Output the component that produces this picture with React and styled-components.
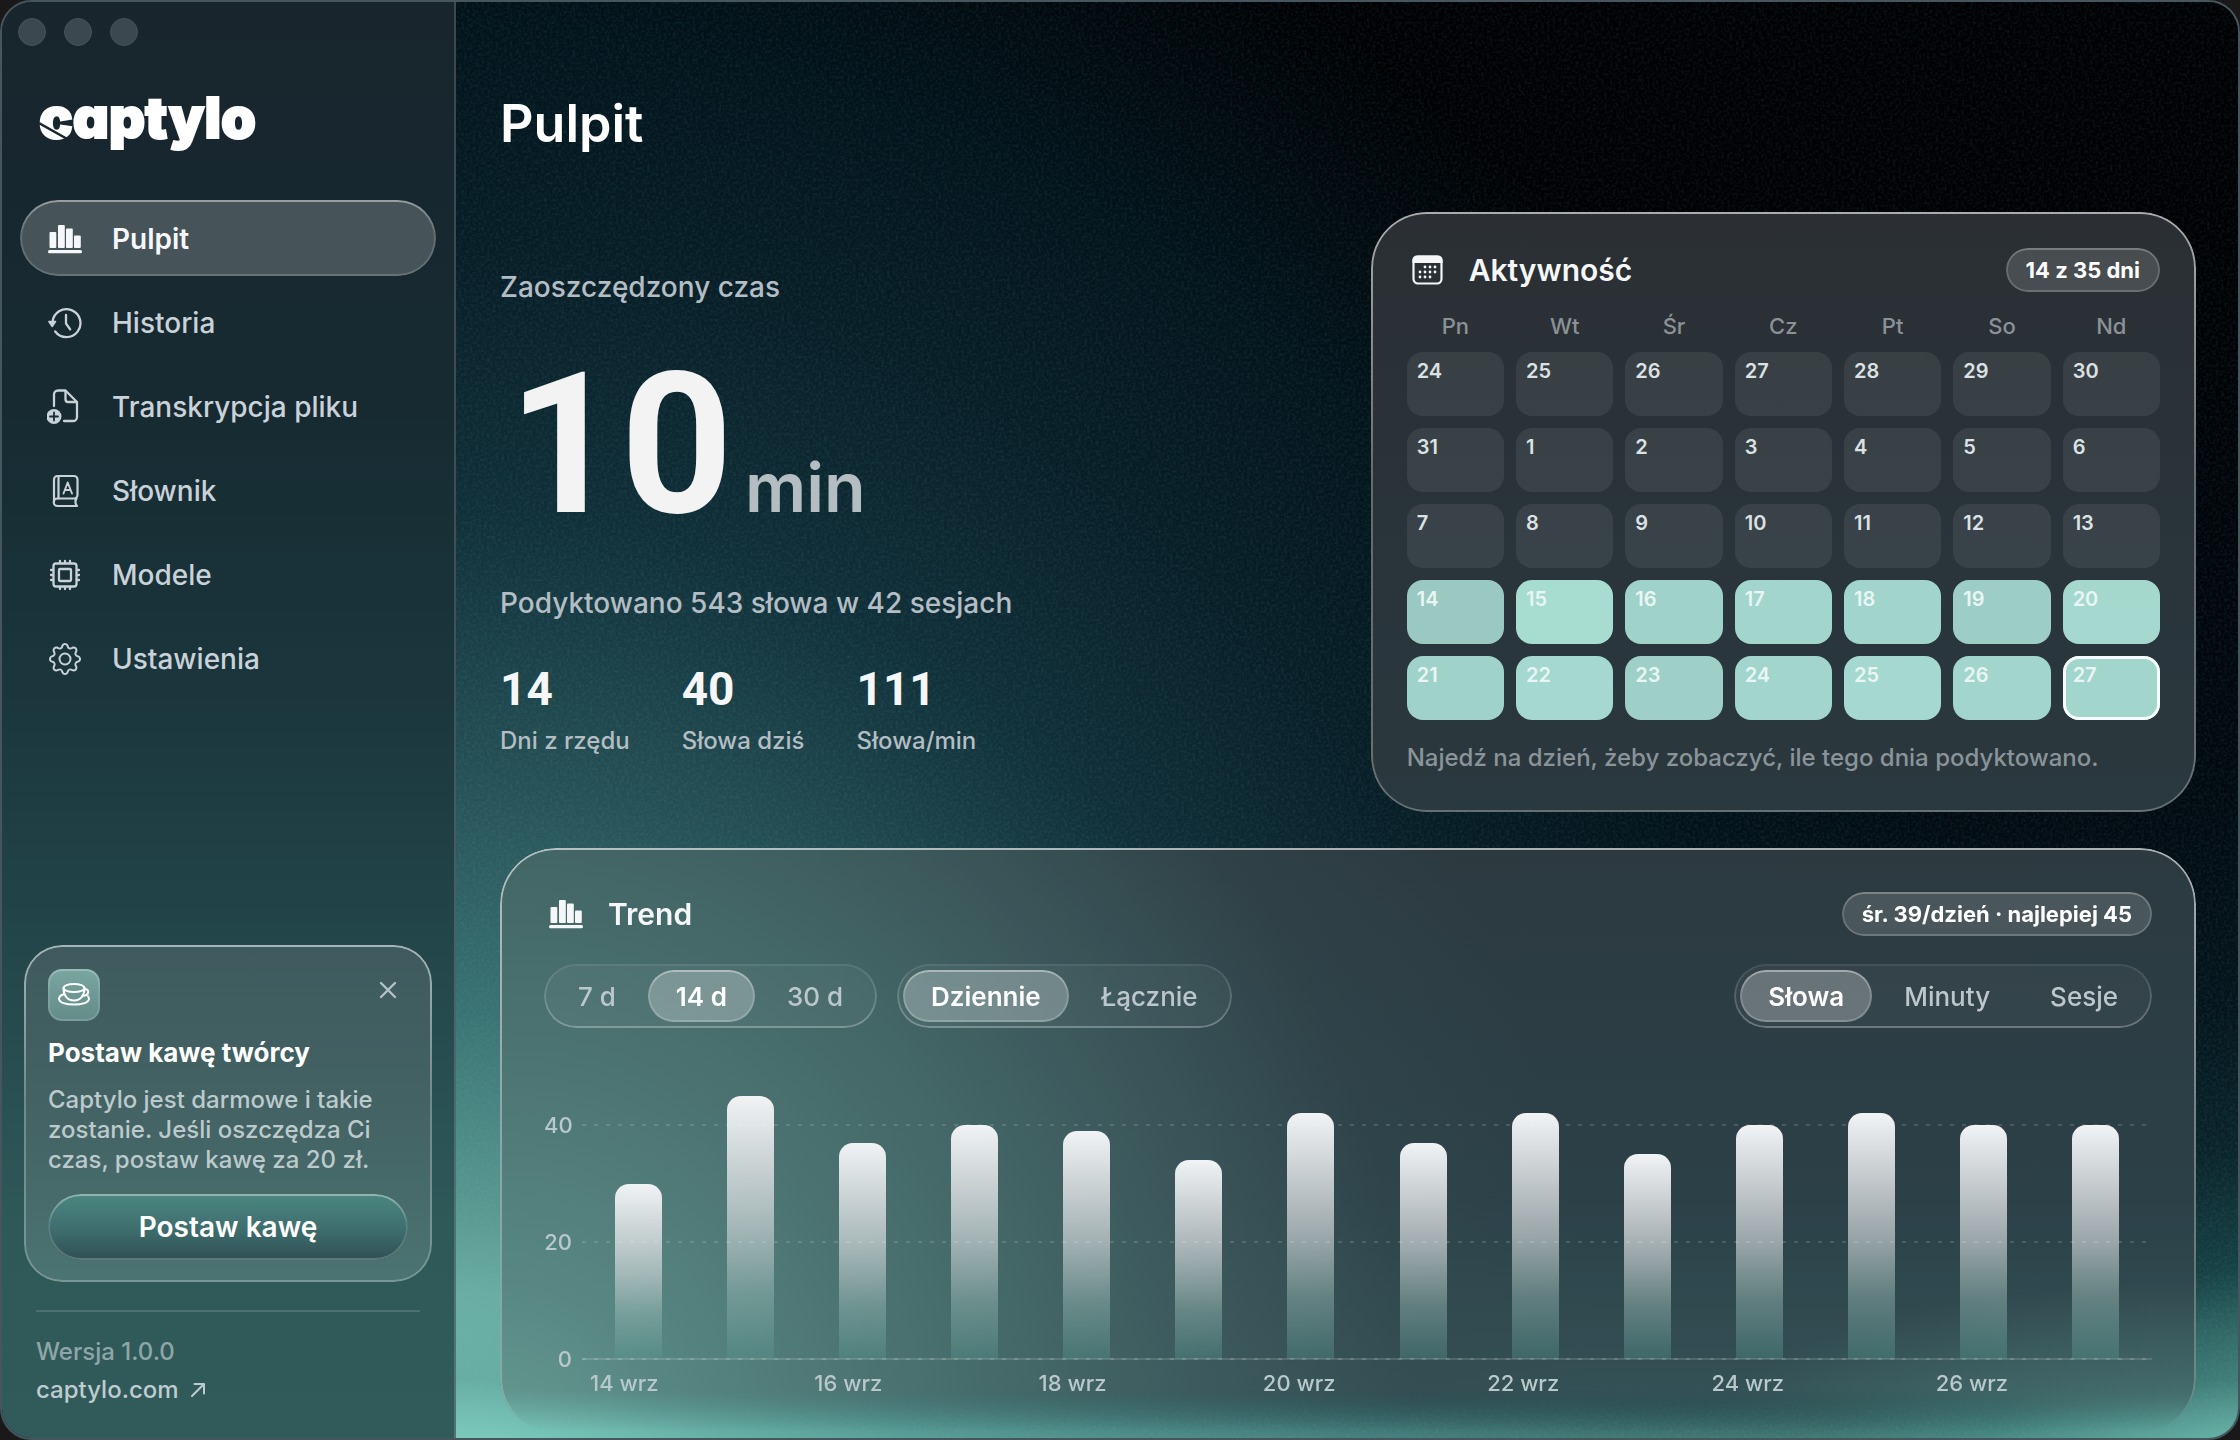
import { useState } from "react";
import styled, { createGlobalStyle, css } from "styled-components";
import { BsGear } from "react-icons/bs";

const WEEKDAYS = ["Pn", "Wt", "Śr", "Cz", "Pt", "So", "Nd"];

const WEEKS = [
  [24, 25, 26, 27, 28, 29, 30].map((day) => ({ day, words: 0 })),
  [31, 1, 2, 3, 4, 5, 6].map((day) => ({ day, words: 0 })),
  [7, 8, 9, 10, 11, 12, 13].map((day) => ({ day, words: 0 })),
  [
    { day: 14, words: 30 },
    { day: 15, words: 45 },
    { day: 16, words: 37 },
    { day: 17, words: 40 },
    { day: 18, words: 39 },
    { day: 19, words: 34 },
    { day: 20, words: 42 },
  ],
  [
    { day: 21, words: 37 },
    { day: 22, words: 42 },
    { day: 23, words: 35 },
    { day: 24, words: 40 },
    { day: 25, words: 42 },
    { day: 26, words: 40 },
    { day: 27, words: 40, today: true },
  ],
];

const BARS = WEEKS.flat().filter(({ words }) => words > 0);
const TICKS = [40, 20, 0];

const NAV = [
  { label: "Pulpit", icon: <ChartIcon /> },
  { label: "Historia", icon: <HistoryIcon /> },
  { label: "Transkrypcja pliku", icon: <FileIcon /> },
  { label: "Słownik", icon: <BookIcon /> },
  { label: "Modele", icon: <ChipIcon /> },
  { label: "Ustawienia", icon: <BsGear size={32} /> },
];

const STATS = [
  { value: "14", label: "Dni z rzędu" },
  { value: "40", label: "Słowa dziś" },
  { value: "111", label: "Słowa/min" },
];

function ChartIcon() {
  return (
    <svg width="36" height="36" viewBox="0 0 36 36" fill="currentColor" aria-hidden="true">
      <rect x="2.500" y="11" width="6.800" height="16" rx="1" />
      <rect x="11" y="4" width="6.800" height="23" rx="1" />
      <rect x="19" y="7.500" width="6.800" height="19.500" rx="1" />
      <rect x="27" y="14.500" width="6.800" height="12.500" rx="1" />
      <rect x="1" y="29" width="34" height="3.200" rx="1.500" />
    </svg>
  );
}

function HistoryIcon() {
  return (
    <svg width="36" height="36" viewBox="0 0 36 36" fill="none" stroke="currentColor" strokeWidth="2.300" strokeLinecap="round" strokeLinejoin="round" aria-hidden="true">
      <path d="M5.500 17a14 14 0 1 1 2.700 9.500" />
      <path d="M19 10v8.500l4.200 5.800" />
      <path d="M1.800 16.500h6.800L5.200 21.500z" fill="currentColor" strokeWidth="1.400" />
    </svg>
  );
}

function FileIcon() {
  return (
    <svg width="36" height="36" viewBox="0 0 36 36" fill="none" stroke="currentColor" strokeWidth="2.300" strokeLinecap="round" strokeLinejoin="round" aria-hidden="true">
      <path d="M7 17V5.500a4 4 0 0 1 4-4h7.500L30 13v15a4 4 0 0 1-4 4h-9" />
      <path d="M18.500 2v8.500a2.500 2.500 0 0 0 2.500 2.500h8.500" />
      <circle cx="7" cy="27.500" r="7.500" fill="currentColor" stroke="none" />
      <path d="M7 23.500v8M3 27.500h8" stroke="#182d35" strokeWidth="1.800" />
    </svg>
  );
}

function BookIcon() {
  return (
    <svg width="36" height="36" viewBox="0 0 36 36" fill="none" stroke="currentColor" strokeWidth="2.200" strokeLinecap="round" strokeLinejoin="round" aria-hidden="true">
      <path d="M7 29V6.500A3.500 3.500 0 0 1 10.500 3H27a3.500 3.500 0 0 1 3.500 3.500V22a3.500 3.500 0 0 1-3.500 3.500H10.500a3.500 3.500 0 0 0 0 7.500h19.500c-2-2-2-5.500-.5-7.500" />
      <path d="M11.500 3v22.500" />
      <path d="M16.500 20.500 20.700 9.500 25 20.500M18 17h5.500" strokeWidth="1.900" />
    </svg>
  );
}

function ChipIcon() {
  return (
    <svg width="36" height="36" viewBox="0 0 36 36" fill="none" stroke="currentColor" strokeWidth="2.300" strokeLinecap="round" strokeLinejoin="round" aria-hidden="true">
      <rect x="6.500" y="6.500" width="23" height="23" rx="2.500" />
      <rect x="12" y="12" width="12" height="12" rx="1" />
      <path d="M13 4v2M18 4v2M23 4v2M13 30v2M18 30v2M23 30v2M4 13h2M4 18h2M4 23h2M30 13h2M30 18h2M30 23h2" />
    </svg>
  );
}

function CupIcon() {
  return (
    <svg width="36" height="36" viewBox="0 0 36 36" fill="none" stroke="currentColor" strokeWidth="2" strokeLinecap="round" strokeLinejoin="round" aria-hidden="true">
      <ellipse cx="18" cy="11" rx="10.500" ry="4" />
      <path d="M7.500 11c0 7 3.500 12.500 10.500 12.500S28.500 18 28.500 11" />
      <path d="M28 12.500c3-.8 4.600.5 4.200 2.700s-2.800 3.600-5.700 3.500" />
      <path d="M8.500 17C5 18 3 19.500 3 21.800 3 25.500 9.800 27.600 18 27.600s15-2.100 15-5.800c0-1-.3-1.700-1-2.400" />
    </svg>
  );
}

function CalendarIcon() {
  return (
    <svg width="34" height="34" viewBox="0 0 34 34" fill="currentColor" aria-hidden="true">
      <rect x="2.500" y="3.500" width="28" height="27" rx="4.500" fill="none" stroke="currentColor" strokeWidth="2.200" />
      <path d="M1.400 10V7a4.500 4.500 0 0 1 4.500-4.500h21.200A4.500 4.500 0 0 1 31.600 7v3z" />
      {[14, 19, 24].map((y, row) =>
        [9, 14, 19, 24].map((x, col) =>
          (row === 0 && col === 0) || (row === 2 && col === 3) ? null : (
            <circle key={`${x}-${y}`} cx={x} cy={y} r="1.400" />
          )
        )
      )}
    </svg>
  );
}

const Segmented = ({ label, options, initial }) => {
  const [active, setActive] = useState(initial);

  return (
    <SegmentGroup role="group" aria-label={label}>
      {options.map((option) => (
        <SegmentButton
          key={option}
          type="button"
          aria-pressed={option === active}
          $active={option === active}
          onClick={() => setActive(option)}
        >
          {option}
        </SegmentButton>
      ))}
    </SegmentGroup>
  );
};

const Sidebar = () => {
  const [promoOpen, setPromoOpen] = useState(true);

  return (
    <SidebarStyled>
      <WindowControls>
        <WindowDot type="button" aria-label="Zamknij okno" />
        <WindowDot type="button" aria-label="Minimalizuj" />
        <WindowDot type="button" aria-label="Powiększ" />
      </WindowControls>
      <Logo>
        captylo
        <LogoCut width="42" height="24" viewBox="0 0 42 24" aria-hidden="true">
          <path d="M0 2 30 19" stroke="#18262e" strokeWidth="2.500" />
        </LogoCut>
      </Logo>
      <Nav>
        {NAV.map(({ label, icon }, idx) => (
          <NavLink key={label} href="#" $active={idx === 0}>
            <NavIcon>{icon}</NavIcon>
            {label}
          </NavLink>
        ))}
      </Nav>
      {promoOpen && (
        <Promo>
          <PromoTop>
            <PromoIcon>
              <CupIcon />
            </PromoIcon>
            <CloseButton type="button" aria-label="Zamknij" onClick={() => setPromoOpen(false)}>
              <svg width="20" height="20" viewBox="0 0 20 20" fill="none" stroke="currentColor" strokeWidth="2.400" strokeLinecap="round">
                <path d="M3 3l14 14M17 3 3 17" />
              </svg>
            </CloseButton>
          </PromoTop>
          <PromoTitle>Postaw kawę twórcy</PromoTitle>
          <PromoText>Captylo jest darmowe i takie zostanie. Jeśli oszczędza Ci czas, postaw kawę za 20 zł.</PromoText>
          <PromoButton type="button">Postaw kawę</PromoButton>
        </Promo>
      )}
      <SidebarFooter>
        <Version>Wersja 1.0.0</Version>
        <SiteLink href="#">
          captylo.com
          <svg width="18" height="18" viewBox="0 0 18 18" fill="none" stroke="currentColor" strokeWidth="2" strokeLinecap="round" strokeLinejoin="round" aria-hidden="true">
            <path d="M3 15 15 3M5.500 3H15v9.500" />
          </svg>
        </SiteLink>
      </SidebarFooter>
    </SidebarStyled>
  );
};

const Activity = () => (
  <ActivityCard>
    <CardHeader>
      <CardTitle>
        <CalendarIcon />
        Aktywność
      </CardTitle>
      <Badge>14 z 35 dni</Badge>
    </CardHeader>
    <Calendar>
      <CalendarHead>
        <CalendarRow>
          {WEEKDAYS.map((name) => (
            <Weekday key={name} scope="col">
              {name}
            </Weekday>
          ))}
        </CalendarRow>
      </CalendarHead>
      <CalendarBody>
        {WEEKS.map((week, idx) => (
          <CalendarRow key={idx}>
            {week.map(({ day, words, today }) => (
              <Day key={day} $words={words} $today={today}>
                {day}
              </Day>
            ))}
          </CalendarRow>
        ))}
      </CalendarBody>
    </Calendar>
    <ActivityHint>Najedź na dzień, żeby zobaczyć, ile tego dnia podyktowano.</ActivityHint>
  </ActivityCard>
);

const Trend = () => (
  <TrendCard>
    <CardHeader>
      <CardTitle>
        <ChartIcon />
        Trend
      </CardTitle>
      <Badge>śr. 39/dzień · najlepiej 45</Badge>
    </CardHeader>
    <Filters>
      <Segmented label="Zakres" options={["7 d", "14 d", "30 d"]} initial="14 d" />
      <Segmented label="Tryb" options={["Dziennie", "Łącznie"]} initial="Dziennie" />
      <FilterSpacer />
      <Segmented label="Miara" options={["Słowa", "Minuty", "Sesje"]} initial="Słowa" />
    </Filters>
    <Chart>
      <YAxis>
        {TICKS.map((tick) => (
          <YTick key={tick}>{tick}</YTick>
        ))}
      </YAxis>
      <Bars>
        {BARS.map(({ day, words }) => (
          <BarSlot key={day}>
            <Bar style={{ height: `${(words / 40) * 100}%` }} />
          </BarSlot>
        ))}
      </Bars>
      <GridLines>
        {TICKS.map((tick) => (
          <GridLine key={tick} $base={tick === 0} />
        ))}
      </GridLines>
      <XAxis>
        {BARS.filter((_, idx) => idx % 2 === 0).map(({ day }) => (
          <XLabel key={day}>{day} wrz</XLabel>
        ))}
      </XAxis>
    </Chart>
  </TrendCard>
);

const App = () => {
  return (
    <>
      <GlobalStyle />
      <Window>
        <Sidebar />
        <Main>
          <Grain aria-hidden="true">
            <filter id="grain">
              <feTurbulence type="fractalNoise" baseFrequency="0.35" numOctaves="2" seed="4" />
              <feColorMatrix values="0 0 0 0 0.2  0 0 0 0 0.6  0 0 0 0 0.68  1.6 0 0 0 -0.6" />
            </filter>
            <rect width="100%" height="100%" filter="url(#grain)" />
          </Grain>
          <Content>
            <PageTitle>Pulpit</PageTitle>
            <Overview>
              <Summary>
                <SummaryLabel>Zaoszczędzony czas</SummaryLabel>
                <SavedTime>
                  10<SavedUnit>min</SavedUnit>
                </SavedTime>
                <SummaryText>Podyktowano 543 słowa w 42 sesjach</SummaryText>
                <Stats>
                  {STATS.map(({ value, label }) => (
                    <Stat key={label}>
                      <StatLabel>{label}</StatLabel>
                      <StatValue>{value}</StatValue>
                    </Stat>
                  ))}
                </Stats>
              </Summary>
              <Activity />
            </Overview>
            <Trend />
          </Content>
        </Main>
      </Window>
    </>
  );
};

const GlobalStyle = createGlobalStyle`
  *, *::before, *::after {
    box-sizing: border-box;
  }

  body {
    margin: 0;
    background: #1a1818;
    color: #ffffff;
    font-family: Inter, "Noto Sans", sans-serif;
    -webkit-font-smoothing: antialiased;
  }

  h1, h2, h3, p {
    margin: 0;
  }

  button {
    font-family: inherit;
    cursor: pointer;
  }
`;

// two pixel light edge that follows the rounded corners
const glassEdge = (top, side, bottom) => css`
  position: relative;

  &::before {
    content: "";
    position: absolute;
    inset: 0;
    padding: 2px;
    border-radius: inherit;
    background: linear-gradient(
      rgba(255, 255, 255, ${top}),
      rgba(255, 255, 255, ${side}) 45%,
      rgba(255, 255, 255, ${bottom})
    );
    mask: linear-gradient(#000 0 0) content-box exclude, linear-gradient(#000 0 0);
    pointer-events: none;
  }
`;

const Window = styled.div`
  display: flex;
  min-height: 100vh;
  border: 2px solid #45565c;
  border-radius: 32px;
  overflow: hidden;
  background: #17262e;
`;

const SidebarStyled = styled.aside`
  display: flex;
  flex-direction: column;
  flex: none;
  width: 454px;
  padding: 16px 0 29px;
  border-right: 2px solid rgba(255, 255, 255, 0.16);
  background: linear-gradient(#18252d 0%, #172a32 28%, #1a363c 48%, #24484c 68%, #2f5859 85%, #315b5a 100%);
`;

const WindowControls = styled.div`
  display: flex;
  gap: 18px;
  padding: 0 16px;
`;

const WindowDot = styled.button`
  width: 28px;
  height: 28px;
  padding: 0;
  border: 1px solid #45525a;
  border-radius: 50%;
  background: #3c4850;
`;

const Logo = styled.div`
  position: relative;
  align-self: flex-start;
  margin: 42px 0 0 37px;
  font-size: 56px;
  line-height: 60px;
  font-weight: 900;
  font-feature-settings: "cv11";
  -webkit-text-stroke: 2px #ffffff;
`;

const LogoCut = styled.svg`
  position: absolute;
  left: 0;
  top: 33px;
`;

const Nav = styled.nav`
  display: flex;
  flex-direction: column;
  gap: 8px;
  margin: 52px 18px 0;
`;

const NavLink = styled.a`
  display: flex;
  align-items: center;
  gap: 29px;
  height: 76px;
  padding: 2px 27px 0;
  border-radius: 38px;
  font-size: 28px;
  font-weight: 500;
  color: #c9d2d8;
  text-decoration: none;

  ${({ $active }) =>
    $active &&
    css`
      background: #465359;
      color: #f5f7fa;
      font-weight: 600;
      ${glassEdge(0.45, 0.15, 0.18)}
    `}
`;

const NavIcon = styled.span`
  display: flex;
  align-items: center;
  justify-content: center;
  width: 36px;
  height: 36px;
`;

const Promo = styled.section`
  margin: auto 22px 0;
  padding: 24px 24px 22px;
  border-radius: 38px;
  background: linear-gradient(#3e5a5e, #446465 55%, #4b7472);
  ${glassEdge(0.55, 0.25, 0.25)}
`;

const PromoTop = styled.div`
  display: flex;
  justify-content: space-between;
`;

const PromoIcon = styled.div`
  display: flex;
  align-items: center;
  justify-content: center;
  width: 52px;
  height: 52px;
  border-radius: 14px;
  background: linear-gradient(#7aa6a1, #638b89);
  ${glassEdge(0.25, 0.1, 0.15)}
`;

const CloseButton = styled.button`
  display: flex;
  align-items: center;
  justify-content: center;
  width: 40px;
  height: 42px;
  padding: 0;
  border: 0;
  background: none;
  color: #b3c1c4;
`;

const PromoTitle = styled.h3`
  margin-top: 16px;
  font-size: 26px;
  line-height: 32px;
  font-weight: 700;
`;

const PromoText = styled.p`
  margin-top: 16px;
  font-size: 24px;
  line-height: 30px;
  font-weight: 500;
  color: #bccacc;
`;

const PromoButton = styled.button`
  display: block;
  width: 100%;
  height: 66px;
  margin-top: 19px;
  border: 0;
  border-radius: 33px;
  background: linear-gradient(#4b8780, #3f6f70 50%, #305054);
  color: #ffffff;
  font-size: 28px;
  font-weight: 600;
  ${glassEdge(0.4, 0.12, 0.22)}
`;

const SidebarFooter = styled.footer`
  display: flex;
  flex-direction: column;
  align-items: flex-start;
  margin: 28px 34px 0;
  padding-top: 21px;
  border-top: 2px solid rgba(255, 255, 255, 0.14);
  font-size: 24px;
  line-height: 38px;
  font-weight: 500;
`;

const Version = styled.span`
  color: #8ea6a7;
`;

const SiteLink = styled.a`
  display: flex;
  align-items: center;
  gap: 10px;
  color: #bfcccf;
  text-decoration: none;
`;

const Main = styled.main`
  position: relative;
  flex: 1;
  min-width: 0;
  background:
    linear-gradient(to top, rgba(115, 195, 182, 0.55), rgba(60, 125, 122, 0.3) 4%, transparent 10%),
    radial-gradient(
      36% 34% at 103% 104%,
      #7fc9bc 0%,
      rgba(80, 145, 137, 0.9) 22%,
      rgba(30, 84, 84, 0.6) 48%,
      rgba(14, 44, 50, 0.4) 72%,
      transparent 100%
    ),
    radial-gradient(
      82% 112% at 0% 105%,
      #84cec0 5%,
      #5b9b93 18%,
      #3a7272 31%,
      #254f54 46%,
      #102f38 62%,
      #081d26 78%,
      #03131b 92%,
      transparent 110%
    ),
    linear-gradient(#000103 20%, #010910 55%, #0d2a33 100%);
`;

const Grain = styled.svg`
  position: absolute;
  inset: 0;
  width: 100%;
  height: 100%;
  opacity: 0.12;
`;

const Content = styled.div`
  position: relative;
  display: flex;
  flex-direction: column;
  gap: 36px;
  padding: 92px 42px 4px 44px;
`;

const PageTitle = styled.h1`
  margin-bottom: 22px;
  font-size: 52px;
  line-height: 60px;
  font-weight: 600;
`;

const Overview = styled.div`
  display: grid;
  grid-template-columns: 1.055fr 1fr;
`;

const Summary = styled.section`
  padding-top: 57px;
  font-weight: 500;
  color: #b4bdc3;
`;

const SummaryLabel = styled.h2`
  font-size: 28px;
  line-height: 36px;
  font-weight: 500;
`;

const SavedTime = styled.p`
  display: flex;
  align-items: baseline;
  gap: 12px;
  margin-top: 40px;
  padding-left: 8px;
  font-family: Roboto, Inter, sans-serif;
  font-size: 196px;
  line-height: 200px;
  font-weight: 700;
  color: #f3f3f3;
`;

const SavedUnit = styled.span`
  font-family: Inter, "Noto Sans", sans-serif;
  font-size: 68px;
  line-height: 68px;
  font-weight: 600;
  color: #b4bdc2;
`;

const SummaryText = styled.p`
  margin-top: 40px;
  font-size: 28px;
  line-height: 36px;
`;

const Stats = styled.dl`
  display: flex;
  gap: 52px;
  margin: 44px 0 0;
`;

const Stat = styled.div`
  display: flex;
  flex-direction: column;
  gap: 12px;
`;

const StatValue = styled.dd`
  order: -1;
  margin: 0;
  font-family: Roboto, Inter, sans-serif;
  font-size: 46px;
  line-height: 48px;
  font-weight: 700;
  color: #f5f6f7;
`;

const StatLabel = styled.dt`
  font-size: 24px;
  line-height: 32px;
`;

const ActivityCard = styled.section`
  padding: 36px 36px 38px;
  border-radius: 56px;
  background: linear-gradient(#2b2f33, #29333a 50%, #2a393f);
  ${glassEdge(0.6, 0.28, 0.28)}
`;

const CardHeader = styled.header`
  display: flex;
  align-items: center;
  justify-content: space-between;
  height: 44px;
`;

const CardTitle = styled.h2`
  display: flex;
  align-items: center;
  gap: 24px;
  padding-left: 4px;
  font-size: 30px;
  font-weight: 600;
  color: #f4f6f7;
`;

const Badge = styled.span`
  padding: 0 20px;
  border-radius: 22px;
  background: rgba(255, 255, 255, 0.14);
  font-size: 22px;
  line-height: 44px;
  font-weight: 700;
  ${glassEdge(0.28, 0.16, 0.2)}
`;

const Calendar = styled.table`
  display: block;
  margin-top: 20px;
`;

const CalendarHead = styled.thead`
  display: block;
`;

const CalendarRow = styled.tr`
  display: grid;
  grid-template-columns: repeat(7, 1fr);
  gap: 12px;
`;

const CalendarBody = styled.tbody`
  display: grid;
  gap: 12px;
  margin-top: 12px;
`;

const Weekday = styled.th`
  padding: 0;
  font-size: 22px;
  line-height: 28px;
  font-weight: 500;
  color: #8a9297;
`;

const Day = styled.td`
  height: 64px;
  padding: 6px 10px;
  border-radius: 16px;
  background: ${({ $words }) =>
    $words ? `rgba(178, 234, 222, ${0.62 + $words / 150})` : "rgba(255, 255, 255, 0.075)"};
  color: ${({ $words }) => ($words ? "#e9f6f4" : "#dce1e4")};
  font-size: 20px;
  line-height: 26px;
  font-weight: 600;
  ${({ $today }) => $today && "box-shadow: inset 0 0 0 3px #f6fcfb;"}
`;

const ActivityHint = styled.p`
  margin-top: 22px;
  font-size: 24px;
  line-height: 32px;
  font-weight: 500;
  color: #8a9498;
`;

const TrendCard = styled.section`
  padding: 44px 44px 36px;
  border-radius: 56px;
  background:
    radial-gradient(30% 30% at 100% 104%, rgba(90, 140, 134, 0.7), transparent 100%),
    radial-gradient(
      60% 190% at 0% 104%,
      #679c94 0%,
      #588783 16%,
      #4d7574 35%,
      #426465 56%,
      rgba(60, 88, 92, 0.75) 75%,
      rgba(52, 74, 80, 0.4) 90%,
      transparent 108%
    ),
    linear-gradient(#2c3a40, #2c4048 60%, #355559);
  mask-image: linear-gradient(#000 calc(100% - 44px), transparent calc(100% - 4px));
  ${glassEdge(0.6, 0.35, 0.2)}
`;

const Filters = styled.div`
  display: flex;
  gap: 20px;
  margin-top: 28px;
`;

const FilterSpacer = styled.div`
  flex: 1;
`;

const SegmentGroup = styled.div`
  display: flex;
  gap: 4px;
  padding: 6px;
  border-radius: 32px;
  background: rgba(255, 255, 255, 0.04);
  ${glassEdge(0.08, 0.16, 0.28)}
`;

const SegmentButton = styled.button`
  height: 52px;
  padding: 0 28px;
  border: 0;
  border-radius: 26px;
  background: transparent;
  color: #bcc7cb;
  font-size: 26px;
  font-weight: 500;

  ${({ $active }) =>
    $active &&
    css`
      background: rgba(255, 255, 255, 0.26);
      color: #ffffff;
      font-weight: 600;
      ${glassEdge(0.4, 0.16, 0.2)}
    `}
`;

const Chart = styled.div`
  display: grid;
  grid-template-columns: 28px 1fr;
  grid-template-rows: 234px auto;
  column-gap: 10px;
  margin-top: 97px;
  font-size: 22px;
  font-weight: 500;
  color: #b9c8cb;
`;

const YAxis = styled.div`
  display: flex;
  flex-direction: column;
  justify-content: space-between;
  margin: -13px 0;
  text-align: right;
`;

const YTick = styled.span`
  line-height: 26px;
`;

const Bars = styled.div`
  grid-area: 1 / 2;
  display: flex;
`;

const BarSlot = styled.div`
  display: flex;
  flex: 1;
  align-items: flex-end;
  justify-content: center;
`;

const Bar = styled.div`
  width: 42%;
  border-radius: 14px 14px 0 0;
  background: linear-gradient(
    rgba(241, 243, 245, 1),
    rgba(225, 228, 230, 0.85) 25%,
    rgba(205, 212, 214, 0.68) 50%,
    rgba(150, 184, 180, 0.48) 75%,
    rgba(84, 148, 141, 0.36)
  );
`;

const GridLines = styled.div`
  grid-area: 1 / 2;
  display: flex;
  flex-direction: column;
  justify-content: space-between;
  margin: -1px 0;
`;

const GridLine = styled.div`
  height: 2px;
  background: ${({ $base }) => ($base ? "rgba(255, 255, 255, 0.14)" : "transparent")}
    repeating-linear-gradient(90deg, rgba(255, 255, 255, 0.14) 0 4px, transparent 4px 12px);
`;

const XAxis = styled.div`
  grid-area: 2 / 2;
  display: grid;
  grid-template-columns: repeat(7, 1fr);
  padding-top: 9px;
  line-height: 30px;
`;

const XLabel = styled.span`
  padding-left: 8px;
`;

export default App;
